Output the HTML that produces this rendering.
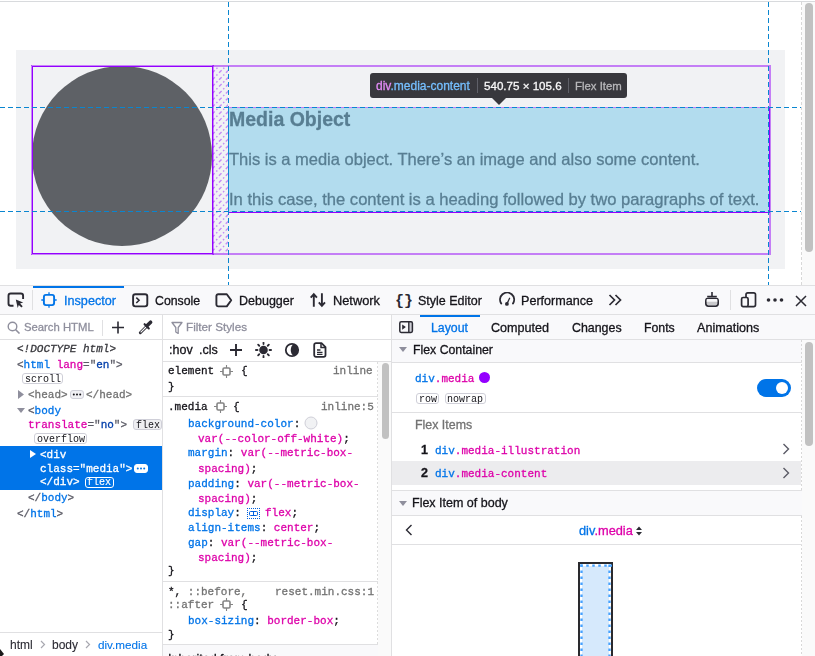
<!DOCTYPE html>
<html><head><meta charset="utf-8"><style>
html,body{margin:0;padding:0;width:815px;height:656px;overflow:hidden;background:#fff}
.t{position:absolute;white-space:pre;line-height:1;will-change:transform;-webkit-text-stroke:0.3px currentColor}
.r{position:absolute;display:block}
.bm{display:inline-block;width:0;height:0}
</style></head><body>
<div class="r" style="left:0px;top:0px;width:815px;height:285px;background:#ffffff;"></div>
<div class="r" style="left:0px;top:1px;width:815px;height:1px;background:#d8dadd;"></div>
<div class="r" style="left:802px;top:2px;width:13px;height:283px;background:#fafafa;"></div>
<svg class="r" style="left:801px;top:2px;" width="1" height="283" viewBox="0 0 1 283"><line x1="0.5" y1="0" x2="0.5" y2="283" stroke="#d8d8d8" stroke-width="1" stroke-dasharray="3 2"/></svg>
<div class="r" style="left:805px;top:3px;width:8px;height:249px;background:#c1c1c1;border-radius:4px"></div>
<div class="r" style="left:16px;top:50px;width:769px;height:219px;background:#f1f2f4;"></div>
<div class="r" style="left:32px;top:66px;width:180px;height:180px;background:#5e6166;border-radius:50%"></div>
<div class="r" style="left:228px;top:107px;width:541px;height:105px;background:#b2dcee;"></div>
<svg class="r" style="left:213px;top:67px;" width="15" height="186" viewBox="0 0 15 186"><line x1="-194.60" y1="186" x2="-8.60" y2="0" stroke="#c48af5" stroke-width="1.4" stroke-dasharray="3.6 2.3 1.5 2.3" stroke-dashoffset="7.15"/><line x1="-187.75" y1="186" x2="-1.75" y2="0" stroke="#c48af5" stroke-width="1.4" stroke-dasharray="3.6 2.3 1.5 2.3" stroke-dashoffset="7.15"/><line x1="-180.90" y1="186" x2="5.10" y2="0" stroke="#c48af5" stroke-width="1.4" stroke-dasharray="3.6 2.3 1.5 2.3" stroke-dashoffset="7.15"/><line x1="-174.05" y1="186" x2="11.95" y2="0" stroke="#c48af5" stroke-width="1.4" stroke-dasharray="3.6 2.3 1.5 2.3" stroke-dashoffset="7.15"/><line x1="-167.20" y1="186" x2="18.80" y2="0" stroke="#c48af5" stroke-width="1.4" stroke-dasharray="3.6 2.3 1.5 2.3" stroke-dashoffset="7.15"/><line x1="-160.35" y1="186" x2="25.65" y2="0" stroke="#c48af5" stroke-width="1.4" stroke-dasharray="3.6 2.3 1.5 2.3" stroke-dashoffset="7.15"/><line x1="-153.50" y1="186" x2="32.50" y2="0" stroke="#c48af5" stroke-width="1.4" stroke-dasharray="3.6 2.3 1.5 2.3" stroke-dashoffset="7.15"/><line x1="-146.65" y1="186" x2="39.35" y2="0" stroke="#c48af5" stroke-width="1.4" stroke-dasharray="3.6 2.3 1.5 2.3" stroke-dashoffset="7.15"/><line x1="-139.80" y1="186" x2="46.20" y2="0" stroke="#c48af5" stroke-width="1.4" stroke-dasharray="3.6 2.3 1.5 2.3" stroke-dashoffset="7.15"/><line x1="-132.95" y1="186" x2="53.05" y2="0" stroke="#c48af5" stroke-width="1.4" stroke-dasharray="3.6 2.3 1.5 2.3" stroke-dashoffset="7.15"/><line x1="-126.10" y1="186" x2="59.90" y2="0" stroke="#c48af5" stroke-width="1.4" stroke-dasharray="3.6 2.3 1.5 2.3" stroke-dashoffset="7.15"/><line x1="-119.25" y1="186" x2="66.75" y2="0" stroke="#c48af5" stroke-width="1.4" stroke-dasharray="3.6 2.3 1.5 2.3" stroke-dashoffset="7.15"/><line x1="-112.40" y1="186" x2="73.60" y2="0" stroke="#c48af5" stroke-width="1.4" stroke-dasharray="3.6 2.3 1.5 2.3" stroke-dashoffset="7.15"/><line x1="-105.55" y1="186" x2="80.45" y2="0" stroke="#c48af5" stroke-width="1.4" stroke-dasharray="3.6 2.3 1.5 2.3" stroke-dashoffset="7.15"/><line x1="-98.70" y1="186" x2="87.30" y2="0" stroke="#c48af5" stroke-width="1.4" stroke-dasharray="3.6 2.3 1.5 2.3" stroke-dashoffset="7.15"/><line x1="-91.85" y1="186" x2="94.15" y2="0" stroke="#c48af5" stroke-width="1.4" stroke-dasharray="3.6 2.3 1.5 2.3" stroke-dashoffset="7.15"/><line x1="-85.00" y1="186" x2="101.00" y2="0" stroke="#c48af5" stroke-width="1.4" stroke-dasharray="3.6 2.3 1.5 2.3" stroke-dashoffset="7.15"/><line x1="-78.15" y1="186" x2="107.85" y2="0" stroke="#c48af5" stroke-width="1.4" stroke-dasharray="3.6 2.3 1.5 2.3" stroke-dashoffset="7.15"/><line x1="-71.30" y1="186" x2="114.70" y2="0" stroke="#c48af5" stroke-width="1.4" stroke-dasharray="3.6 2.3 1.5 2.3" stroke-dashoffset="7.15"/><line x1="-64.45" y1="186" x2="121.55" y2="0" stroke="#c48af5" stroke-width="1.4" stroke-dasharray="3.6 2.3 1.5 2.3" stroke-dashoffset="7.15"/><line x1="-57.60" y1="186" x2="128.40" y2="0" stroke="#c48af5" stroke-width="1.4" stroke-dasharray="3.6 2.3 1.5 2.3" stroke-dashoffset="7.15"/><line x1="-50.75" y1="186" x2="135.25" y2="0" stroke="#c48af5" stroke-width="1.4" stroke-dasharray="3.6 2.3 1.5 2.3" stroke-dashoffset="7.15"/><line x1="-43.90" y1="186" x2="142.10" y2="0" stroke="#c48af5" stroke-width="1.4" stroke-dasharray="3.6 2.3 1.5 2.3" stroke-dashoffset="7.15"/><line x1="-37.05" y1="186" x2="148.95" y2="0" stroke="#c48af5" stroke-width="1.4" stroke-dasharray="3.6 2.3 1.5 2.3" stroke-dashoffset="7.15"/><line x1="-30.20" y1="186" x2="155.80" y2="0" stroke="#c48af5" stroke-width="1.4" stroke-dasharray="3.6 2.3 1.5 2.3" stroke-dashoffset="7.15"/><line x1="-23.35" y1="186" x2="162.65" y2="0" stroke="#c48af5" stroke-width="1.4" stroke-dasharray="3.6 2.3 1.5 2.3" stroke-dashoffset="7.15"/><line x1="-16.50" y1="186" x2="169.50" y2="0" stroke="#c48af5" stroke-width="1.4" stroke-dasharray="3.6 2.3 1.5 2.3" stroke-dashoffset="7.15"/><line x1="-9.65" y1="186" x2="176.35" y2="0" stroke="#c48af5" stroke-width="1.4" stroke-dasharray="3.6 2.3 1.5 2.3" stroke-dashoffset="7.15"/><line x1="-2.80" y1="186" x2="183.20" y2="0" stroke="#c48af5" stroke-width="1.4" stroke-dasharray="3.6 2.3 1.5 2.3" stroke-dashoffset="7.15"/><line x1="4.05" y1="186" x2="190.05" y2="0" stroke="#c48af5" stroke-width="1.4" stroke-dasharray="3.6 2.3 1.5 2.3" stroke-dashoffset="7.15"/><line x1="10.90" y1="186" x2="196.90" y2="0" stroke="#c48af5" stroke-width="1.4" stroke-dasharray="3.6 2.3 1.5 2.3" stroke-dashoffset="7.15"/><line x1="17.75" y1="186" x2="203.75" y2="0" stroke="#c48af5" stroke-width="1.4" stroke-dasharray="3.6 2.3 1.5 2.3" stroke-dashoffset="7.15"/></svg>
<div class="r" style="left:212px;top:65px;width:558px;height:2px;background:#c47ef6;"></div>
<div class="r" style="left:212px;top:253px;width:558px;height:2px;background:#c47ef6;"></div>
<div class="r" style="left:769px;top:65px;width:2px;height:190px;background:#c47ef6;"></div>
<div class="r" style="left:31px;top:65px;width:183px;height:1px;background:rgba(148,0,255,0.45);"></div>
<div class="r" style="left:31px;top:254px;width:183px;height:1px;background:rgba(148,0,255,0.45);"></div>
<div class="r" style="left:31px;top:65px;width:1px;height:190px;background:rgba(148,0,255,0.45);"></div>
<div class="r" style="left:213px;top:65px;width:1px;height:190px;background:rgba(148,0,255,0.45);"></div>
<div class="r" style="left:32px;top:66px;width:181px;height:1px;background:#9400ff;"></div>
<div class="r" style="left:32px;top:253px;width:181px;height:1px;background:#9400ff;"></div>
<div class="r" style="left:32px;top:66px;width:1px;height:188px;background:#9400ff;"></div>
<div class="r" style="left:212px;top:66px;width:1px;height:188px;background:#9400ff;"></div>
<div class="r" style="left:769px;top:107px;width:1px;height:106px;background:#9400ff;"></div>
<div class="t" style="left:229px;top:110.009px;font-family:'Liberation Sans', sans-serif;font-size:19.5px;color:#587e92;font-weight:700;font-style:normal;">Media Object</div>
<div class="t" style="left:229px;top:151.002px;font-family:'Liberation Sans', sans-serif;font-size:16.5px;color:#587e92;font-weight:400;font-style:normal;">This is a media object. There’s an image and also some content.</div>
<div class="t" style="left:229px;top:192.010px;font-family:'Liberation Sans', sans-serif;font-size:16.6px;color:#587e92;font-weight:400;font-style:normal;">In this case, the content is a heading followed by two paragraphs of text.</div>
<div class="r" style="left:228px;top:107px;width:541px;height:1px;background:#c47ef6;"></div>
<div class="r" style="left:228px;top:212px;width:541px;height:1px;background:#9400ff;"></div>
<svg class="r" style="left:0px;top:107px;" width="801" height="1" viewBox="0 0 801 1"><line x1="0" y1="0.5" x2="801" y2="0.5" stroke="#0a86d0" stroke-width="1" stroke-dasharray="5 3"/></svg>
<svg class="r" style="left:0px;top:211px;" width="801" height="1" viewBox="0 0 801 1"><line x1="0" y1="0.5" x2="801" y2="0.5" stroke="#0a86d0" stroke-width="1" stroke-dasharray="5 3"/></svg>
<svg class="r" style="left:228px;top:2px;" width="1" height="283" viewBox="0 0 1 283"><line x1="0.5" y1="0" x2="0.5" y2="283" stroke="#0a86d0" stroke-width="1" stroke-dasharray="5 3"/></svg>
<svg class="r" style="left:768px;top:2px;" width="1" height="283" viewBox="0 0 1 283"><line x1="0.5" y1="0" x2="0.5" y2="283" stroke="#0a86d0" stroke-width="1" stroke-dasharray="5 3"/></svg>
<div class="r" style="left:228px;top:107px;width:1px;height:105px;background:#0a86d0;"></div>
<div class="r" style="left:370px;top:73px;width:257px;height:25px;background:#38383d;border-radius:3px"></div>
<svg class="r" style="left:491px;top:97px;" width="16" height="8" viewBox="0 0 16 8"><polygon points="0,0 16,0 8,8" fill="#38383d"/></svg>
<div class="t" style="left:375.5px;top:80.014px;font-family:'Liberation Sans', sans-serif;font-size:12px;color:#15141a;font-weight:400;font-style:normal;"><span style="color:#e38cf7">div</span><span style="color:#75bfff">.media-content</span></div>
<div class="r" style="left:477px;top:78px;width:1px;height:15px;background:#5f6068;"></div>
<div class="t" style="left:484px;top:80.009px;font-family:'Liberation Sans', sans-serif;font-size:11.6px;color:#f9f9fa;font-weight:400;font-style:normal;">540.75 × 105.6</div>
<div class="r" style="left:568px;top:78px;width:1px;height:15px;background:#5f6068;"></div>
<div class="t" style="left:575px;top:81.006px;font-family:'Liberation Sans', sans-serif;font-size:11.4px;color:#b8b8bb;font-weight:400;font-style:normal;">Flex Item</div>
<div class="r" style="left:0px;top:285px;width:815px;height:30px;background:#f9f9fb;"></div>
<div class="r" style="left:0px;top:285px;width:815px;height:1px;background:#e0e0e2;"></div>
<div class="r" style="left:0px;top:314px;width:815px;height:1px;background:#e0e0e2;"></div>
<div class="r" style="left:33px;top:286px;width:91px;height:2px;background:#0074e8;"></div>
<div class="r" style="left:32px;top:290px;width:1px;height:20px;background:#e0e0e2;"></div>
<div class="r" style="left:730px;top:290px;width:1px;height:20px;background:#e0e0e2;"></div>
<div class="t" style="left:63.5px;top:295.011px;font-family:'Liberation Sans', sans-serif;font-size:12.65px;color:#0074e8;font-weight:400;font-style:normal;">Inspector</div>
<div class="t" style="left:155px;top:295.010px;font-family:'Liberation Sans', sans-serif;font-size:12.3px;color:#15141a;font-weight:400;font-style:normal;">Console</div>
<div class="t" style="left:239px;top:295.013px;font-family:'Liberation Sans', sans-serif;font-size:12.5px;color:#15141a;font-weight:400;font-style:normal;">Debugger</div>
<div class="t" style="left:332.6px;top:295.009px;font-family:'Liberation Sans', sans-serif;font-size:12.8px;color:#15141a;font-weight:400;font-style:normal;">Network</div>
<div class="t" style="left:418.3px;top:295.013px;font-family:'Liberation Sans', sans-serif;font-size:12.5px;color:#15141a;font-weight:400;font-style:normal;">Style Editor</div>
<div class="t" style="left:521.2px;top:295.006px;font-family:'Liberation Sans', sans-serif;font-size:12.6px;color:#15141a;font-weight:400;font-style:normal;">Performance</div>
<svg class="r" style="left:7px;top:292px;" width="18" height="16" viewBox="0 0 18 16"><path d="M6.5 13.8H3.8a2.3 2.3 0 0 1-2.3-2.3V3.8a2.3 2.3 0 0 1 2.3-2.3h10a2.3 2.3 0 0 1 2.3 2.3v3.2" fill="none" stroke="#2b2a33" stroke-width="1.9"/><path d="M8.8 7.6l7.4 2.9-3.1 1.1 2.6 2.6-1.3 1.3-2.6-2.6-1.1 3.1z" fill="#2b2a33"/></svg>
<svg class="r" style="left:41px;top:292px;" width="16" height="16" viewBox="0 0 16 16"><rect x="2.9" y="2.9" width="10.2" height="10.2" rx="2" fill="none" stroke="#0074e8" stroke-width="1.9"/><path d="M8 0.3v2.6M8 13.1v2.6M0.3 8h2.6M13.1 8h2.6" stroke="#0074e8" stroke-width="1.3"/></svg>
<svg class="r" style="left:131px;top:292px;" width="18" height="16" viewBox="0 0 18 16"><rect x="2.1" y="2.2" width="14.2" height="12.2" rx="2.3" fill="none" stroke="#2b2a33" stroke-width="1.9"/><path d="M5.3 5.6l2.8 2.7-2.8 2.7" fill="none" stroke="#2b2a33" stroke-width="1.5"/></svg>
<svg class="r" style="left:215px;top:292px;" width="18" height="16" viewBox="0 0 18 16"><path d="M3.2 2.2h8.6l4.4 6.1-4.4 6.1H3.2a1.8 1.8 0 0 1-1.8-1.8V4a1.8 1.8 0 0 1 1.8-1.8z" fill="none" stroke="#2b2a33" stroke-width="1.9" stroke-linejoin="round"/></svg>
<svg class="r" style="left:310px;top:292px;" width="16" height="16" viewBox="0 0 16 16"><path d="M3.8 14.8V2.2M0.7 5.6L3.8 2.2L6.9 5.6M11.9 1.2V13.8M8.8 10.4L11.9 13.8L15 10.4" fill="none" stroke="#2b2a33" stroke-width="1.9"/></svg>
<svg class="r" style="left:396px;top:292px;" width="16" height="16" viewBox="0 0 16 16"><text x="8" y="13" text-anchor="middle" font-family="Liberation Mono" font-weight="700" font-size="15" fill="#2b2a33">{}</text></svg>
<svg class="r" style="left:499px;top:292px;" width="17" height="16" viewBox="0 0 17 16"><path d="M2.2 11.4A7 7 0 1 1 14 11.4" fill="none" stroke="#2b2a33" stroke-width="1.9" stroke-linecap="round"/><path d="M7.9 11.9L10.6 6.3" stroke="#2b2a33" stroke-width="1.3" stroke-linecap="round"/><circle cx="7.9" cy="11.9" r="1.9" fill="#2b2a33"/></svg>
<svg class="r" style="left:608px;top:293px;" width="15" height="14" viewBox="0 0 15 14"><path d="M1.5 2l5 5-5 5M7.5 2l5 5-5 5" fill="none" stroke="#2b2a33" stroke-width="1.7"/></svg>
<svg class="r" style="left:704px;top:291px;" width="16" height="17" viewBox="0 0 16 17"><path d="M8 1v4.5M3.2 5.5h9.6" stroke="#2b2a33" stroke-width="1.6"/><rect x="1.8" y="7.3" width="12.4" height="7.9" rx="2.6" fill="#c9c9cc" stroke="#2b2a33" stroke-width="1.6"/><rect x="2.7" y="8.1" width="10.6" height="2.6" fill="#f9f9fb"/></svg>
<svg class="r" style="left:740px;top:291px;" width="17" height="17" viewBox="0 0 17 17"><rect x="6" y="1.8" width="9.5" height="13.8" rx="1.8" fill="none" stroke="#2b2a33" stroke-width="1.7"/><rect x="1.6" y="6.5" width="6.5" height="9.1" rx="1.5" fill="#f9f9fb" stroke="#2b2a33" stroke-width="1.7"/></svg>
<svg class="r" style="left:766px;top:297px;" width="18" height="6" viewBox="0 0 18 6"><circle cx="2.5" cy="3" r="1.8" fill="#2b2a33"/><circle cx="9" cy="3" r="1.8" fill="#2b2a33"/><circle cx="15.5" cy="3" r="1.8" fill="#2b2a33"/></svg>
<svg class="r" style="left:795px;top:295px;" width="12" height="12" viewBox="0 0 12 12"><path d="M1 1l10 10M11 1L1 11" stroke="#2b2a33" stroke-width="1.5"/></svg>
<div class="r" style="left:0px;top:315px;width:815px;height:341px;background:#ffffff;"></div>
<div class="r" style="left:162px;top:315px;width:1px;height:341px;background:#e0e0e2;"></div>
<div class="r" style="left:391px;top:315px;width:1px;height:341px;background:#e0e0e2;"></div>
<div class="r" style="left:0px;top:339px;width:162px;height:1px;background:#e0e0e2;"></div>
<svg class="r" style="left:7px;top:321px;" width="14" height="13" viewBox="0 0 14 13"><circle cx="5.5" cy="5.5" r="4.3" fill="none" stroke="#8f8f9d" stroke-width="1.4"/><path d="M8.5 8.5l4 4" stroke="#8f8f9d" stroke-width="1.6"/></svg>
<div class="t" style="left:23.5px;top:322.013px;font-family:'Liberation Sans', sans-serif;font-size:11.3px;color:#8f8f9d;font-weight:400;font-style:normal;">Search HTML</div>
<div class="r" style="left:102px;top:320px;width:1px;height:16px;background:#e0e0e2;"></div>
<svg class="r" style="left:111px;top:321px;" width="14" height="13" viewBox="0 0 14 13"><path d="M7 0.5v12M1 6.5h12" stroke="#2b2a33" stroke-width="1.6"/></svg>
<svg class="r" style="left:138px;top:319px;" width="16" height="16" viewBox="0 0 16 16"><path d="M2.3 13.7L8.8 7.2" stroke="#2b2a33" stroke-width="2.9" stroke-linecap="round"/><path d="M2.6 13.4L8.5 7.5" stroke="#fff" stroke-width="1.1"/><path d="M6.6 5.2L10.8 9.4" stroke="#2b2a33" stroke-width="2.1" stroke-linecap="round"/><path d="M9.2 6.6L12.6 3.2" stroke="#2b2a33" stroke-width="3.6" stroke-linecap="round"/></svg>
<div class="t" style="left:17px;top:344.006px;font-family:'Liberation Mono', monospace;font-size:11px;color:#15141a;font-weight:400;font-style:italic;"><span style="color:#38383d">&lt;!DOCTYPE html&gt;</span></div>
<div class="t" style="left:17px;top:360.003px;font-family:'Liberation Mono', monospace;font-size:11px;color:#15141a;font-weight:400;font-style:normal;"><span style="color:#5b5b66">&lt;</span><span style="color:#0074e8">html</span><span style="color:#5b5b66"> </span><span style="color:#dd00a9">lang</span><span style="color:#5b5b66">="</span><span style="color:#003eaa">en</span><span style="color:#5b5b66">"&gt;</span></div>
<div class="r" style="left:22px;top:372.5px;width:41px;height:11px;background:#fff;border:1px solid #cfcfd8;border-radius:3px;box-sizing:border-box"></div>
<div class="t" style="left:24.5px;top:375.006px;font-family:'Liberation Mono', monospace;font-size:10px;color:#15141a;font-weight:400;font-style:normal;-webkit-text-stroke:0">scroll</div>
<svg class="r" style="left:18px;top:390px;" width="6" height="9" viewBox="0 0 6 9"><path d="M0 0l6 4.5L0 9z" fill="#8f8f9d"/></svg>
<div class="t" style="left:28px;top:390.003px;font-family:'Liberation Mono', monospace;font-size:11px;color:#15141a;font-weight:400;font-style:normal;"><span style="color:#737373">&lt;head&gt;</span></div>
<div class="r" style="left:70px;top:389.5px;width:14px;height:9px;background:#f0f0f4;border:1px solid #cfcfd8;border-radius:3px;box-sizing:border-box"></div>
<svg class="r" style="left:70px;top:389.5px;" width="14" height="9" viewBox="0 0 14 9"><circle cx="3.8" cy="4.5" r="1" fill="#15141a"/><circle cx="7.0" cy="4.5" r="1" fill="#15141a"/><circle cx="10.2" cy="4.5" r="1" fill="#15141a"/></svg>
<div class="t" style="left:86px;top:390.003px;font-family:'Liberation Mono', monospace;font-size:11px;color:#15141a;font-weight:400;font-style:normal;"><span style="color:#737373">&lt;/head&gt;</span></div>
<svg class="r" style="left:17px;top:408px;" width="8" height="5" viewBox="0 0 8 5"><path d="M0 0h8L4 5z" fill="#8f8f9d"/></svg>
<div class="t" style="left:28px;top:406.003px;font-family:'Liberation Mono', monospace;font-size:11px;color:#15141a;font-weight:400;font-style:normal;"><span style="color:#5b5b66">&lt;</span><span style="color:#0074e8">body</span></div>
<div class="t" style="left:28px;top:420.000px;font-family:'Liberation Mono', monospace;font-size:11px;color:#15141a;font-weight:400;font-style:normal;"><span style="color:#dd00a9">translate</span><span style="color:#5b5b66">="</span><span style="color:#003eaa">no</span><span style="color:#5b5b66">"&gt;</span></div>
<div class="r" style="left:132.5px;top:418.5px;width:29.5px;height:11.5px;background:#efeff2;border:1px solid #cfcfd8;border-radius:3px;box-sizing:border-box;overflow:hidden"></div>
<div class="t" style="left:135.5px;top:421.000px;font-family:'Liberation Mono', monospace;font-size:10px;color:#15141a;font-weight:400;font-style:normal;-webkit-text-stroke:0">flex</div>
<div class="r" style="left:33.5px;top:432.8px;width:53px;height:11px;background:#fff;border:1px solid #cfcfd8;border-radius:3px;box-sizing:border-box"></div>
<div class="t" style="left:36.5px;top:435.009px;font-family:'Liberation Mono', monospace;font-size:10px;color:#15141a;font-weight:400;font-style:normal;-webkit-text-stroke:0">overflow</div>
<div class="r" style="left:0px;top:446px;width:162px;height:44px;background:#0074e8;"></div>
<svg class="r" style="left:30px;top:450px;" width="6" height="8" viewBox="0 0 6 8"><path d="M0 0l6 4L0 8z" fill="#fff"/></svg>
<div class="t" style="left:39.5px;top:450.000px;font-family:'Liberation Mono', monospace;font-size:11px;color:#15141a;font-weight:400;font-style:normal;"><span style="color:#fff">&lt;div</span></div>
<div class="t" style="left:39.5px;top:464.012px;font-family:'Liberation Mono', monospace;font-size:11px;color:#15141a;font-weight:400;font-style:normal;"><span style="color:#fff">class="media"&gt;</span></div>
<div class="r" style="left:134px;top:463.5px;width:14px;height:9px;background:#fff;border:1px solid #fff;border-radius:3px;box-sizing:border-box"></div>
<svg class="r" style="left:134px;top:463.5px;" width="14" height="9" viewBox="0 0 14 9"><circle cx="3.8" cy="4.5" r="1" fill="#0074e8"/><circle cx="7.0" cy="4.5" r="1" fill="#0074e8"/><circle cx="10.2" cy="4.5" r="1" fill="#0074e8"/></svg>
<div class="t" style="left:39.5px;top:477.012px;font-family:'Liberation Mono', monospace;font-size:11px;color:#15141a;font-weight:400;font-style:normal;"><span style="color:#fff">&lt;/div&gt;</span></div>
<div class="r" style="left:84.5px;top:476.5px;width:29px;height:11px;background:transparent;border:1px solid #fff;border-radius:3px;box-sizing:border-box"></div>
<div class="t" style="left:87.3px;top:478.003px;font-family:'Liberation Mono', monospace;font-size:10px;color:#fff;font-weight:400;font-style:normal;-webkit-text-stroke:0.15px #fff">flex</div>
<div class="t" style="left:28px;top:493.000px;font-family:'Liberation Mono', monospace;font-size:11px;color:#15141a;font-weight:400;font-style:normal;"><span style="color:#5b5b66">&lt;/</span><span style="color:#0074e8">body</span><span style="color:#5b5b66">&gt;</span></div>
<div class="t" style="left:17px;top:509.009px;font-family:'Liberation Mono', monospace;font-size:11px;color:#15141a;font-weight:400;font-style:normal;"><span style="color:#5b5b66">&lt;/</span><span style="color:#0074e8">html</span><span style="color:#5b5b66">&gt;</span></div>
<div class="r" style="left:0px;top:632px;width:162px;height:1px;background:#e0e0e2;"></div>
<div class="t" style="left:10.3px;top:639.008px;font-family:'Liberation Sans', sans-serif;font-size:12px;color:#2b2a33;font-weight:400;font-style:normal;-webkit-text-stroke:0.1px currentColor">html</div>
<svg class="r" style="left:40px;top:640px;" width="6" height="9" viewBox="0 0 6 9"><path d="M1 1l3.5 3.5L1 8" fill="none" stroke="#a8a8b0" stroke-width="1.2"/></svg>
<div class="t" style="left:52px;top:639.008px;font-family:'Liberation Sans', sans-serif;font-size:12px;color:#2b2a33;font-weight:400;font-style:normal;-webkit-text-stroke:0.1px currentColor">body</div>
<svg class="r" style="left:85px;top:640px;" width="6" height="9" viewBox="0 0 6 9"><path d="M1 1l3.5 3.5L1 8" fill="none" stroke="#a8a8b0" stroke-width="1.2"/></svg>
<div class="t" style="left:97.5px;top:639.012px;font-family:'Liberation Sans', sans-serif;font-size:11.7px;color:#0074e8;font-weight:400;font-style:normal;-webkit-text-stroke:0.1px currentColor">div.media</div>
<svg class="r" style="left:0px;top:648px;" width="5" height="8" viewBox="0 0 5 8"><path d="M0 1l4 5-2 2H0z" fill="#1a1a1a"/></svg>
<div class="r" style="left:163px;top:339px;width:228px;height:1px;background:#e0e0e2;"></div>
<svg class="r" style="left:171px;top:321px;" width="12" height="13" viewBox="0 0 12 13"><path d="M1 1.5h10L7.2 6.5v6L4.8 11V6.5z" fill="none" stroke="#8f8f9d" stroke-width="1.3" stroke-linejoin="round"/></svg>
<div class="t" style="left:186.4px;top:321.005px;font-family:'Liberation Sans', sans-serif;font-size:11.7px;color:#8f8f9d;font-weight:400;font-style:normal;">Filter Styles</div>
<div class="t" style="left:169px;top:344.010px;font-family:'Liberation Sans', sans-serif;font-size:12.5px;color:#15141a;font-weight:400;font-style:normal;">:hov</div>
<div class="t" style="left:199.3px;top:344.010px;font-family:'Liberation Sans', sans-serif;font-size:12.5px;color:#15141a;font-weight:400;font-style:normal;">.cls</div>
<svg class="r" style="left:229px;top:343px;" width="14" height="14" viewBox="0 0 14 14"><path d="M7 1v12M1 7h12" stroke="#2b2a33" stroke-width="1.9"/></svg>
<svg class="r" style="left:255px;top:342px;" width="17" height="16" viewBox="0 0 17 16"><circle cx="8.5" cy="8" r="4.3" fill="#2b2a33"/><line x1="14.50" y1="8.00" x2="16.10" y2="8.00" stroke="#2b2a33" stroke-width="1.8" stroke-linecap="round"/><line x1="12.74" y1="12.24" x2="13.87" y2="13.37" stroke="#2b2a33" stroke-width="1.8" stroke-linecap="round"/><line x1="8.50" y1="14.00" x2="8.50" y2="15.60" stroke="#2b2a33" stroke-width="1.8" stroke-linecap="round"/><line x1="4.26" y1="12.24" x2="3.13" y2="13.37" stroke="#2b2a33" stroke-width="1.8" stroke-linecap="round"/><line x1="2.50" y1="8.00" x2="0.90" y2="8.00" stroke="#2b2a33" stroke-width="1.8" stroke-linecap="round"/><line x1="4.26" y1="3.76" x2="3.13" y2="2.63" stroke="#2b2a33" stroke-width="1.8" stroke-linecap="round"/><line x1="8.50" y1="2.00" x2="8.50" y2="0.40" stroke="#2b2a33" stroke-width="1.8" stroke-linecap="round"/><line x1="12.74" y1="3.76" x2="13.87" y2="2.63" stroke="#2b2a33" stroke-width="1.8" stroke-linecap="round"/></svg>
<svg class="r" style="left:284px;top:342px;" width="16" height="16" viewBox="0 0 16 16"><circle cx="8" cy="8" r="6.2" fill="none" stroke="#2b2a33" stroke-width="1.8"/><path d="M9.5 2.2A6 6 0 0 1 9.5 13.8A5 6.5 0 0 1 9.5 2.2z" fill="#2b2a33"/></svg>
<svg class="r" style="left:313px;top:342px;" width="14" height="16" viewBox="0 0 14 16"><path d="M3 1.2h5.5l4 4V13a1.8 1.8 0 0 1-1.8 1.8H3A1.8 1.8 0 0 1 1.2 13V3A1.8 1.8 0 0 1 3 1.2z" fill="none" stroke="#2b2a33" stroke-width="1.8" stroke-linejoin="round"/><path d="M8 1.5v4h4" fill="none" stroke="#2b2a33" stroke-width="1.5"/><path d="M4 8h3.5M4 10.3h5.5M4 12.4h5.5" stroke="#2b2a33" stroke-width="1.3"/></svg>
<div class="r" style="left:163px;top:361px;width:228px;height:1px;background:#e0e0e2;"></div>
<div class="r" style="left:378px;top:362px;width:13px;height:294px;background:#fafafa;"></div>
<svg class="r" style="left:377px;top:362px;" width="1" height="294" viewBox="0 0 1 294"><line x1="0.5" y1="0" x2="0.5" y2="294" stroke="#dcdcdc" stroke-width="1" stroke-dasharray="2 2"/></svg>
<div class="r" style="left:382px;top:363px;width:7px;height:76px;background:#c1c1c1;border-radius:3.5px"></div>
<div class="t" style="left:167.7px;top:366.003px;font-family:'Liberation Mono', monospace;font-size:11px;color:#15141a;font-weight:400;font-style:normal;">element</div>
<svg class="r" style="left:220px;top:364.5px;" width="13" height="13" viewBox="0 0 13 13"><rect x="3" y="3" width="7" height="7" rx="1.2" fill="none" stroke="#858585" stroke-width="1.6"/><path d="M6.5 0v3M6.5 10v3M0 6.5h3M10 6.5h3" stroke="#858585" stroke-width="1.1"/></svg>
<div class="t" style="left:240.5px;top:366.003px;font-family:'Liberation Mono', monospace;font-size:11px;color:#15141a;font-weight:400;font-style:normal;">{</div>
<div class="t" style="left:320.5px;top:366.003px;font-family:'Liberation Mono', monospace;font-size:11px;color:#737373;font-weight:400;font-style:normal;left:333px">inline</div>
<div class="t" style="left:167.7px;top:382.012px;font-family:'Liberation Mono', monospace;font-size:11px;color:#15141a;font-weight:400;font-style:normal;">}</div>
<div class="r" style="left:163px;top:396px;width:215px;height:1px;background:#e0e0e2;"></div>
<div class="t" style="left:167.7px;top:402.009px;font-family:'Liberation Mono', monospace;font-size:11px;color:#15141a;font-weight:400;font-style:normal;">.media</div>
<svg class="r" style="left:213.5px;top:399.5px;" width="13" height="13" viewBox="0 0 13 13"><rect x="3" y="3" width="7" height="7" rx="1.2" fill="none" stroke="#858585" stroke-width="1.6"/><path d="M6.5 0v3M6.5 10v3M0 6.5h3M10 6.5h3" stroke="#858585" stroke-width="1.1"/></svg>
<div class="t" style="left:233px;top:402.009px;font-family:'Liberation Mono', monospace;font-size:11px;color:#15141a;font-weight:400;font-style:normal;">{</div>
<div class="t" style="left:320.5px;top:402.009px;font-family:'Liberation Mono', monospace;font-size:11px;color:#737373;font-weight:400;font-style:normal;">inline:5</div>
<div class="t" style="left:187.8px;top:419.009px;font-family:'Liberation Mono', monospace;font-size:11px;color:#15141a;font-weight:400;font-style:normal;"><span style="color:#0074e8">background-color</span><span style="color:#15141a">:</span></div>
<svg class="r" style="left:304px;top:416px;" width="14" height="14" viewBox="0 0 14 14"><circle cx="7" cy="7" r="6" fill="#f1f2f4" stroke="#cfcfd8" stroke-width="1"/></svg>
<div class="t" style="left:198.3px;top:434.009px;font-family:'Liberation Mono', monospace;font-size:11px;color:#15141a;font-weight:400;font-style:normal;"><span style="color:#dd00a9">var(--color-off-white)</span><span style="color:#15141a">;</span></div>
<div class="t" style="left:187.8px;top:448.003px;font-family:'Liberation Mono', monospace;font-size:11px;color:#15141a;font-weight:400;font-style:normal;"><span style="color:#0074e8">margin</span><span style="color:#15141a">: </span><span style="color:#dd00a9">var(--metric-box-</span></div>
<div class="t" style="left:198.3px;top:464.006px;font-family:'Liberation Mono', monospace;font-size:11px;color:#15141a;font-weight:400;font-style:normal;"><span style="color:#dd00a9">spacing)</span><span style="color:#15141a">;</span></div>
<div class="t" style="left:187.8px;top:479.000px;font-family:'Liberation Mono', monospace;font-size:11px;color:#15141a;font-weight:400;font-style:normal;"><span style="color:#0074e8">padding</span><span style="color:#15141a">: </span><span style="color:#dd00a9">var(--metric-box-</span></div>
<div class="t" style="left:198.3px;top:494.000px;font-family:'Liberation Mono', monospace;font-size:11px;color:#15141a;font-weight:400;font-style:normal;"><span style="color:#dd00a9">spacing)</span><span style="color:#15141a">;</span></div>
<div class="t" style="left:187.8px;top:508.012px;font-family:'Liberation Mono', monospace;font-size:11px;color:#15141a;font-weight:400;font-style:normal;"><span style="color:#0074e8">display</span><span style="color:#15141a">:</span></div>
<svg class="r" style="left:247px;top:508px;" width="13" height="11" viewBox="0 0 13 11"><g fill="#0060df"><rect x="0" y="0" width="1" height="1"/><rect x="0" y="10" width="1" height="1"/><rect x="2" y="0" width="1" height="1"/><rect x="2" y="10" width="1" height="1"/><rect x="4" y="0" width="1" height="1"/><rect x="4" y="10" width="1" height="1"/><rect x="6" y="0" width="1" height="1"/><rect x="6" y="10" width="1" height="1"/><rect x="8" y="0" width="1" height="1"/><rect x="8" y="10" width="1" height="1"/><rect x="10" y="0" width="1" height="1"/><rect x="10" y="10" width="1" height="1"/><rect x="12" y="0" width="1" height="1"/><rect x="12" y="10" width="1" height="1"/><rect x="0" y="2" width="1" height="1"/><rect x="0" y="4" width="1" height="1"/><rect x="0" y="6" width="1" height="1"/><rect x="0" y="8" width="1" height="1"/><rect x="12" y="2" width="1" height="1"/><rect x="12" y="4" width="1" height="1"/><rect x="12" y="6" width="1" height="1"/><rect x="12" y="8" width="1" height="1"/></g><rect x="2.5" y="3.5" width="8" height="4" rx="1" fill="none" stroke="#0060df" stroke-width="1"/><path d="M6.5 3.5v4" stroke="#0060df" stroke-width="1"/></svg>
<div class="t" style="left:265.2px;top:508.012px;font-family:'Liberation Mono', monospace;font-size:11px;color:#15141a;font-weight:400;font-style:normal;"><span style="color:#dd00a9">flex</span><span style="color:#15141a">;</span></div>
<div class="t" style="left:187.8px;top:523.000px;font-family:'Liberation Mono', monospace;font-size:11px;color:#15141a;font-weight:400;font-style:normal;"><span style="color:#0074e8">align-items</span><span style="color:#15141a">: </span><span style="color:#dd00a9">center</span><span style="color:#15141a">;</span></div>
<div class="t" style="left:187.8px;top:538.003px;font-family:'Liberation Mono', monospace;font-size:11px;color:#15141a;font-weight:400;font-style:normal;"><span style="color:#0074e8">gap</span><span style="color:#15141a">: </span><span style="color:#dd00a9">var(--metric-box-</span></div>
<div class="t" style="left:198.3px;top:553.012px;font-family:'Liberation Mono', monospace;font-size:11px;color:#15141a;font-weight:400;font-style:normal;"><span style="color:#dd00a9">spacing)</span><span style="color:#15141a">;</span></div>
<div class="t" style="left:167.7px;top:566.000px;font-family:'Liberation Mono', monospace;font-size:11px;color:#15141a;font-weight:400;font-style:normal;">}</div>
<div class="r" style="left:163px;top:581px;width:215px;height:1px;background:#e0e0e2;"></div>
<div class="t" style="left:167.7px;top:587.006px;font-family:'Liberation Mono', monospace;font-size:11px;color:#15141a;font-weight:400;font-style:normal;"><span style="color:#15141a">*, </span><span style="color:#737373">::before,</span></div>
<div class="t" style="left:274.5px;top:587.006px;font-family:'Liberation Mono', monospace;font-size:11px;color:#737373;font-weight:400;font-style:normal;">reset.min.css:1</div>
<div class="t" style="left:167.7px;top:600.003px;font-family:'Liberation Mono', monospace;font-size:11px;color:#737373;font-weight:400;font-style:normal;">::after</div>
<svg class="r" style="left:220px;top:598px;" width="13" height="13" viewBox="0 0 13 13"><rect x="3" y="3" width="7" height="7" rx="1.2" fill="none" stroke="#858585" stroke-width="1.6"/><path d="M6.5 0v3M6.5 10v3M0 6.5h3M10 6.5h3" stroke="#858585" stroke-width="1.1"/></svg>
<div class="t" style="left:240.5px;top:600.003px;font-family:'Liberation Mono', monospace;font-size:11px;color:#15141a;font-weight:400;font-style:normal;">{</div>
<div class="t" style="left:187.8px;top:616.012px;font-family:'Liberation Mono', monospace;font-size:11px;color:#15141a;font-weight:400;font-style:normal;"><span style="color:#0074e8">box-sizing</span><span style="color:#15141a">: </span><span style="color:#dd00a9">border-box</span><span style="color:#15141a">;</span></div>
<div class="t" style="left:167.7px;top:630.000px;font-family:'Liberation Mono', monospace;font-size:11px;color:#15141a;font-weight:400;font-style:normal;">}</div>
<div class="r" style="left:163px;top:644px;width:215px;height:1px;background:#e0e0e2;"></div>
<div class="r" style="left:163px;top:645px;width:215px;height:11px;background:#f9f9fb;"></div>
<div class="t" style="left:167.7px;top:653.013px;font-family:'Liberation Sans', sans-serif;font-size:12.5px;color:#15141a;font-weight:400;font-style:normal;">Inherited from body</div>
<div class="r" style="left:392px;top:315px;width:423px;height:24px;background:#f9f9fb;"></div>
<div class="r" style="left:392px;top:339px;width:423px;height:1px;background:#e0e0e2;"></div>
<div class="r" style="left:420px;top:315px;width:60px;height:2px;background:#0074e8;"></div>
<svg class="r" style="left:398px;top:320px;" width="17" height="14" viewBox="0 0 17 14"><rect x="11" y="1.8" width="3.3" height="10.6" fill="#d0d0d7"/><rect x="1.8" y="1.8" width="12.6" height="10.7" rx="1.4" fill="none" stroke="#2b2a33" stroke-width="1.5"/><path d="M10.8 1.8v10.6" stroke="#2b2a33" stroke-width="1.4"/><path d="M4.2 4.5l3.7 2.6-3.7 2.6z" fill="#2b2a33"/></svg>
<div class="t" style="left:431.2px;top:322.010px;font-family:'Liberation Sans', sans-serif;font-size:12.3px;color:#0074e8;font-weight:400;font-style:normal;">Layout</div>
<div class="t" style="left:491px;top:322.006px;font-family:'Liberation Sans', sans-serif;font-size:12.6px;color:#15141a;font-weight:400;font-style:normal;">Computed</div>
<div class="t" style="left:571.9px;top:322.003px;font-family:'Liberation Sans', sans-serif;font-size:12.4px;color:#15141a;font-weight:400;font-style:normal;">Changes</div>
<div class="t" style="left:643.5px;top:322.010px;font-family:'Liberation Sans', sans-serif;font-size:12.3px;color:#15141a;font-weight:400;font-style:normal;">Fonts</div>
<div class="t" style="left:697px;top:322.006px;font-family:'Liberation Sans', sans-serif;font-size:12.6px;color:#15141a;font-weight:400;font-style:normal;">Animations</div>
<div class="r" style="left:392px;top:340px;width:410px;height:22px;background:#f9f9fb;"></div>
<div class="r" style="left:392px;top:362px;width:410px;height:1px;background:#e0e0e2;"></div>
<svg class="r" style="left:399px;top:347px;" width="8" height="5" viewBox="0 0 8 5"><path d="M0 0h8L4 5z" fill="#8f8f9d"/></svg>
<div class="t" style="left:412.7px;top:344.010px;font-family:'Liberation Sans', sans-serif;font-size:12.3px;color:#15141a;font-weight:400;font-style:normal;">Flex Container</div>
<div class="r" style="left:802px;top:340px;width:13px;height:316px;background:#fafafa;"></div>
<svg class="r" style="left:801px;top:340px;" width="1" height="316" viewBox="0 0 1 316"><line x1="0.5" y1="0" x2="0.5" y2="316" stroke="#d8d8d8" stroke-width="1" stroke-dasharray="2 2"/></svg>
<div class="r" style="left:805px;top:342px;width:8px;height:104px;background:#c1c1c1;border-radius:4px"></div>
<div class="t" style="left:415px;top:374.000px;font-family:'Liberation Mono', monospace;font-size:11px;color:#15141a;font-weight:400;font-style:normal;"><span style="color:#0074e8">div</span><span style="color:#dd00a9">.media</span></div>
<div class="r" style="left:479px;top:372px;width:11px;height:11px;background:#9400ff;border-radius:50%"></div>
<div class="r" style="left:415.5px;top:392.5px;width:23px;height:11px;background:#fff;border:1px solid #cfcfd8;border-radius:3px;box-sizing:border-box"></div>
<div class="t" style="left:419.0px;top:395.006px;font-family:'Liberation Mono', monospace;font-size:10px;color:#15141a;font-weight:400;font-style:normal;-webkit-text-stroke:0">row</div>
<div class="r" style="left:444.5px;top:392.5px;width:41px;height:11px;background:#fff;border:1px solid #cfcfd8;border-radius:3px;box-sizing:border-box"></div>
<div class="t" style="left:446.5px;top:395.006px;font-family:'Liberation Mono', monospace;font-size:10px;color:#15141a;font-weight:400;font-style:normal;-webkit-text-stroke:0">nowrap</div>
<div class="r" style="left:757px;top:379px;width:34px;height:18px;background:#0074e8;border-radius:9px"></div>
<div class="r" style="left:776px;top:382px;width:12px;height:12px;background:#fff;border-radius:50%"></div>
<div class="r" style="left:392px;top:412px;width:410px;height:1px;background:#e0e0e2;"></div>
<div class="t" style="left:415px;top:419.012px;font-family:'Liberation Sans', sans-serif;font-size:12.4px;color:#737373;font-weight:400;font-style:normal;">Flex Items</div>
<div class="t" style="left:420.6px;top:444.010px;font-family:'Liberation Sans', sans-serif;font-size:12.5px;color:#15141a;font-weight:700;font-style:normal;">1</div>
<div class="t" style="left:435.4px;top:446.000px;font-family:'Liberation Mono', monospace;font-size:11px;color:#15141a;font-weight:400;font-style:normal;"><span style="color:#0074e8">div</span><span style="color:#dd00a9">.media-illustration</span></div>
<svg class="r" style="left:782px;top:443px;" width="8" height="12" viewBox="0 0 8 12"><path d="M1.5 1l5 5-5 5" fill="none" stroke="#5b5b66" stroke-width="1.4"/></svg>
<div class="r" style="left:392px;top:461px;width:409px;height:24px;background:#ececee;"></div>
<div class="t" style="left:420.6px;top:467.007px;font-family:'Liberation Sans', sans-serif;font-size:12.5px;color:#15141a;font-weight:700;font-style:normal;">2</div>
<div class="t" style="left:435.4px;top:469.012px;font-family:'Liberation Mono', monospace;font-size:11px;color:#15141a;font-weight:400;font-style:normal;"><span style="color:#0074e8">div</span><span style="color:#dd00a9">.media-content</span></div>
<svg class="r" style="left:782px;top:467px;" width="8" height="12" viewBox="0 0 8 12"><path d="M1.5 1l5 5-5 5" fill="none" stroke="#5b5b66" stroke-width="1.4"/></svg>
<div class="r" style="left:392px;top:490px;width:410px;height:1px;background:#e0e0e2;"></div>
<div class="r" style="left:392px;top:491px;width:410px;height:24px;background:#f9f9fb;"></div>
<div class="r" style="left:392px;top:515px;width:410px;height:1px;background:#e0e0e2;"></div>
<svg class="r" style="left:399px;top:501px;" width="8" height="5" viewBox="0 0 8 5"><path d="M0 0h8L4 5z" fill="#8f8f9d"/></svg>
<div class="t" style="left:412.4px;top:497.007px;font-family:'Liberation Sans', sans-serif;font-size:12.5px;color:#15141a;font-weight:400;font-style:normal;">Flex Item of body</div>
<svg class="r" style="left:405px;top:524px;" width="8" height="12" viewBox="0 0 8 12"><path d="M6.5 1l-5 5 5 5" fill="none" stroke="#2b2a33" stroke-width="1.4"/></svg>
<div class="t" style="left:579.4px;top:525.009px;font-family:'Liberation Sans', sans-serif;font-size:12.8px;color:#15141a;font-weight:400;font-style:normal;"><span style="color:#0074e8">div</span><span style="color:#dd00a9">.media</span></div>
<svg class="r" style="left:636px;top:526px;" width="6" height="10" viewBox="0 0 6 10"><path d="M0 4l3-3.5L6 4zM0 6l3 3.5L6 6z" fill="#2b2a33"/></svg>
<div class="r" style="left:392px;top:544px;width:410px;height:1px;background:#e0e0e2;"></div>
<div class="r" style="left:578px;top:562px;width:35px;height:94px;background:#2a2a2e;"></div>
<div class="r" style="left:580px;top:564px;width:31px;height:92px;background:#ffffff;"></div>
<div class="r" style="left:582px;top:566px;width:27px;height:90px;background:#d6e9fc;"></div>
<svg class="r" style="left:578px;top:562px;" width="35" height="94" viewBox="0 0 35 94"><g stroke="#45a1ff" stroke-width="2.3" stroke-dasharray="2.5 3.5"><line x1="3.5" y1="2.45" x2="3.5" y2="94"/><line x1="31.5" y1="2.45" x2="31.5" y2="94"/><line x1="2.25" y1="3.6" x2="34" y2="3.6"/></g></svg>
</body></html>
